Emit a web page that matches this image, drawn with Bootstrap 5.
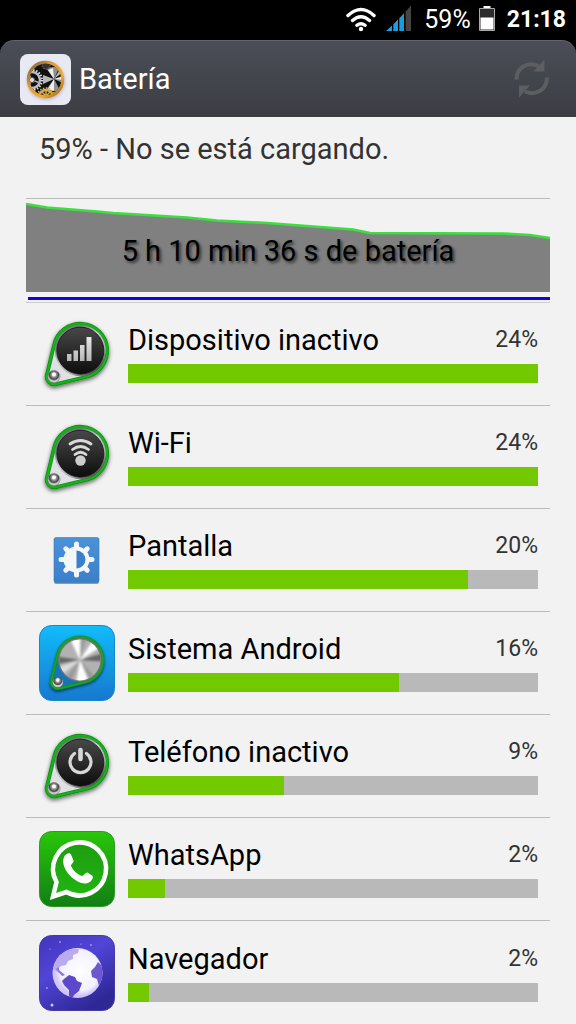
<!DOCTYPE html>
<html lang="es">
<head>
<meta charset="utf-8">
<meta name="viewport" content="width=device-width, initial-scale=1">
<title>Batería</title>
<link rel="stylesheet" href="https://cdn.jsdelivr.net/npm/bootstrap@5.3.0/dist/css/bootstrap.min.css">
<style>
  body { font-family: Roboto, "Noto Sans", sans-serif; background: #f2f2f2; color: #000; }
  .top-area { background: #000; }
  .status-bar { height: 40px; padding-right: 10px; font-size: 25px; line-height: 40px; }
  .clock { font-size: 23px; font-weight: 700; }
  .app-bar { height: 77px; padding: 0 24px 0 20px; border-radius: 14px 14px 0 0; background: linear-gradient(#4b4e57, #3c3d43); border-top: 1px solid #62656c; }
  .app-title { font-size: 29px; line-height: 36px; }
  .state { font-size: 29px; line-height: 36px; color: #333; padding: 14px 13px 31px; }
  .page { padding: 0 26px; }
  .chart-link { border-top: 1px solid #bbb; border-bottom: 1px solid #ccc; height: 105px; color: #000; }
  .chart-plot { height: 93px; }
  .chart-text { font-size: 29px; line-height: 36px; padding-top: 11px; text-shadow: 2px 2px 3px #333; }
  .chart-charge { height: 3px; margin: 5px 0 0 2px; background: #1200e6; }
  .usage { height: 103px; padding: 0 12px 0 13px; gap: 13px; border-bottom: 1px solid #bbb; color: #000; }
  .usage-body { padding-bottom: 3px; }
  .usage-name { font-size: 29px; line-height: 36px; }
  .usage-share { font-size: 23px; line-height: 36px; color: #333; }
  .progress { height: 19px; margin-top: 6px; border-radius: 0; background: #b9b9b9; }
  .progress-bar { background: #73c900; transition: none; }
</style>
</head>
<body>
<svg width="0" height="0" class="position-absolute" aria-hidden="true">
  <defs>
    <linearGradient id="dark" x1="0" y1="0" x2="0" y2="1"><stop offset="0" stop-color="#484848"/><stop offset=".5" stop-color="#2b2b2b"/><stop offset="1" stop-color="#0c0c0c"/></linearGradient>
    <linearGradient id="rim" x1="0" y1="0" x2=".8" y2="1"><stop offset="0" stop-color="#888"/><stop offset=".25" stop-color="#777780"/><stop offset=".5" stop-color="#c9c9d2"/><stop offset=".75" stop-color="#aaa"/><stop offset="1" stop-color="#333"/></linearGradient>
    <linearGradient id="glyph" x1="0" y1="0" x2="0" y2="1"><stop offset="0" stop-color="#e8e8e8"/><stop offset="1" stop-color="#b5b5b5"/></linearGradient>
    <radialGradient id="bead" cx=".5" cy=".35"><stop offset="0" stop-color="#fff"/><stop offset=".35" stop-color="#aaa"/><stop offset=".75" stop-color="#444"/><stop offset="1" stop-color="#ccc"/></radialGradient>
    <filter id="shade" x="-20%" y="-20%" width="150%" height="150%"><feDropShadow dx="0" dy="2" stdDeviation="2" flood-opacity=".6"/></filter>
    <filter id="soft" x="-20%" y="-20%" width="140%" height="140%"><feGaussianBlur stdDeviation="1.6"/></filter>
    <clipPath id="disc"><circle cx="42" cy="34" r="25"/></clipPath>
    <g id="knob" transform="translate(1 2) scale(.96)">
      <path d="M14.8 27.5A28 28 0 1 1 48.500 61.200L16.900 68.800A8 8 0 0 1 7.200 59.100Z" fill="#e0e0e4" stroke="#128f18" stroke-width="4" filter="url(#shade)"/>
      <path d="M14.800 27.500A28 28 0 1 1 48.500 61.200L16.900 68.800A8 8 0 0 1 7.200 59.100Z" fill="none" stroke="#14b31b" stroke-width="2.200"/>
      <circle cx="14.500" cy="61" r="6.400" fill="url(#bead)" stroke="#777" stroke-width=".6"/>
      <circle cx="14.500" cy="58.700" r="2" fill="#fff"/>
      <circle cx="42" cy="34" r="26.600" fill="url(#rim)"/>
      <circle cx="42" cy="34" r="24.500" fill="url(#dark)" stroke="#111" stroke-width=".8"/>
    </g>
  </defs>
</svg>

<header class="top-area text-white">
  <div class="status-bar d-flex align-items-center justify-content-end">
    <svg width="32" height="26" viewBox="0 0 32 26" fill="none" stroke="#fff" stroke-width="3.400" stroke-linecap="round" role="img" aria-label="Wi-Fi">
      <path d="M3 8.500Q16-3.500 29 8.500M7.500 13.500Q16 6 24.500 13.500M12 18.300Q16 15 20 18.300"/><circle cx="16" cy="22" r="2.200" fill="#fff" stroke="none"/>
    </svg>
    <svg class="ms-2 mb-1" width="27" height="27" viewBox="0 0 27 27" role="img" aria-label="Señal móvil">
      <path fill="#159ee0" d="M1 26L7 20.500V26ZM8.300 19.300L13 14.600V26H8.300ZM14.300 13.300L19 8.300V26H14.300Z"/><path fill="#444" d="M20.600 6.500L26 .5V26H20.600Z"/>
    </svg>
    <span class="ms-2 me-2 ps-1">59%</span>
    <svg class="mb-1" width="16" height="27" viewBox="0 0 16 27" role="img" aria-label="Batería al 59%">
      <path fill="#fff" d="M4.500 1h7v3h-7z"/><path d="M.5 3.500h15v22H.5z" fill="#2c2c2c" stroke="#aaa"/><path fill="#fff" d="M1.500 12.500h13V24.500h-13z"/>
    </svg>
    <span class="clock ms-2 ps-1">21:18</span>
  </div>
  <div class="app-bar d-flex align-items-center">
    <svg width="51" height="51" viewBox="0 0 51 51" aria-hidden="true">
      <defs>
        <linearGradient id="gold" x1="0" y1="0" x2="1" y2="1"><stop offset="0" stop-color="#6f5c3c"/><stop offset=".35" stop-color="#e09c35"/><stop offset=".7" stop-color="#f5ab2c"/><stop offset="1" stop-color="#8d5710"/></linearGradient>
        <clipPath id="watch"><circle cx="25.500" cy="25.500" r="15.800"/></clipPath>
      </defs>
      <rect width="51" height="51" rx="8" fill="#e9e9f3"/>
      <circle cx="26" cy="27" r="19" fill="#bcb9c0" filter="url(#soft)"/>
      <circle cx="25.500" cy="25.500" r="17.200" fill="#101010" stroke="url(#gold)" stroke-width="3"/>
      <g clip-path="url(#watch)">
        <circle cx="12" cy="26" r="8" fill="none" stroke="#b9bdc0" stroke-width="2.500"/>
        <circle cx="12" cy="26" r="10" fill="none" stroke="#dcdcdc" stroke-width="2" stroke-dasharray="1.500 1.500"/>
        <path d="M12 26L7 18M12 26L20 29M12 26L8 33" stroke="#aaa" stroke-width="1.800"/>
        <circle cx="12" cy="26" r="2.600" fill="#ddd" stroke="#555"/>
        <path d="M34 25L26 14L40 12ZM34 25L45 21V30ZM34 25L26 36L41 38Z" fill="#8c908e"/>
        <path d="M34 25L28 16L33 14ZM34 25L45 22V26ZM34 25L28 35L34 37Z" fill="#eee"/>
        <path d="M34 25L23 21V30ZM34 25L40 15L43 18Z" fill="#b5b8b5"/>
        <circle cx="26" cy="11" r="4" fill="#333" stroke="#555" stroke-width="1.500" stroke-dasharray="1.500 1"/>
        <circle cx="26" cy="43" r="7" fill="none" stroke="#d8a945" stroke-width="2.500"/>
        <circle cx="26" cy="43" r="9" fill="none" stroke="#e7bd5e" stroke-width="1.500" stroke-dasharray="1.500 1.500"/>
        <path d="M26 36v6M22 38l4 4 4-4" stroke="#d8a945" stroke-width="1.500" fill="none"/>
      </g>
    </svg>
    <h1 class="app-title fw-normal mb-0 ms-2">Batería</h1>
    <button type="button" class="btn p-0 border-0 ms-auto d-flex" aria-label="Actualizar">
      <svg width="40" height="42" viewBox="0 0 40 42" fill="none" stroke="#5c5e61" stroke-width="4">
        <path d="M4.500 21.500C4.500 10 15 3 26.500 8M35 19.500C35 31 24.500 38.500 13 33.500"/>
        <path stroke="none" fill="#5c5e61" d="M32.500 1.500V13.500H21.500ZM7 39.500V27.500H18Z"/>
      </svg>
    </button>
  </div>
</header>

<main class="page">
  <p class="state mb-0">59% - No se está cargando.</p>
  <a href="#historial" class="chart-link d-block text-decoration-none">
    <div class="chart-plot position-relative">
      <svg class="d-block w-100 h-100" viewBox="0 0 524 93" preserveAspectRatio="none" aria-hidden="true">
        <path fill="#808080" d="M0 5L21 8.500 71 12.500 87 14 161 18.500 191 21.500 241 24 327 30.500 344 34 477 34.500 504 36 524 39V93H0Z"/>
        <path fill="none" stroke="#3be03e" stroke-width="2.600" d="M0 5L21 8.500 71 12.500 87 14 161 18.500 191 21.500 241 24 327 30.500 344 34 477 34.500 504 36 524 39"/>
      </svg>
      <div class="chart-text position-absolute top-0 start-0 w-100 h-100 d-flex align-items-center justify-content-center">5 h 10 min 36 s de batería</div>
    </div>
    <div class="chart-charge"></div>
  </a>

  <ul class="list-unstyled mb-0">
    <li><a href="#inactivo" class="usage d-flex align-items-center text-decoration-none">
      <svg class="flex-shrink-0" width="76" height="76" viewBox="0 0 76 76" aria-hidden="true"><use href="#knob"/>
        <path fill="url(#glyph)" d="M28 38h4.500v7H28zM34.500 34.500H39V45h-4.500zM41 29h4.500v16H41zM47.500 21H52.500V45h-5z"/></svg>
      <div class="usage-body flex-grow-1">
        <div class="d-flex justify-content-between"><span class="usage-name">Dispositivo inactivo</span><span class="usage-share">24%</span></div>
        <div class="progress" role="progressbar" aria-label="Dispositivo inactivo"><div class="progress-bar" style="width:100%"></div></div>
      </div></a></li>
    <li><a href="#wifi" class="usage d-flex align-items-center text-decoration-none">
      <svg class="flex-shrink-0" width="76" height="76" viewBox="0 0 76 76" aria-hidden="true"><use href="#knob"/>
        <g fill="none" stroke="#d9d9d9" stroke-width="2.800" stroke-linecap="round"><path d="M31 25Q41.500 18 52 25M33.500 30.500Q41.500 24.500 49.500 30.500M36 35.500Q41.500 31 47 35.500"/></g><circle cx="41.500" cy="41.500" r="5.200" fill="#cdcdcd"/></svg>
      <div class="usage-body flex-grow-1">
        <div class="d-flex justify-content-between"><span class="usage-name">Wi-Fi</span><span class="usage-share">24%</span></div>
        <div class="progress" role="progressbar" aria-label="Wi-Fi"><div class="progress-bar" style="width:100%"></div></div>
      </div></a></li>
    <li><a href="#pantalla" class="usage d-flex align-items-center text-decoration-none">
      <svg class="flex-shrink-0" width="76" height="76" viewBox="0 0 76 76" aria-hidden="true">
        <defs><linearGradient id="display" x1="0" y1="0" x2="0" y2="1"><stop offset="0" stop-color="#4a92d8"/><stop offset="1" stop-color="#3b7fca"/></linearGradient></defs>
        <rect x="15" y="16" width="45" height="46" rx="2" fill="#8b99aa"/><rect x="15" y="15.500" width="45" height="45" rx="2" fill="url(#display)" stroke="#397bbd" stroke-width=".6"/>
        <g fill="#f4f7fa"><g stroke="#f4f7fa" stroke-width="5" stroke-linecap="round"><path d="M37.500 22V53M22 37.500H53M26.800 26.800L48.200 48.200M48.200 26.800L26.800 48.200"/></g><circle cx="37.500" cy="37.500" r="13"/></g>
        <path d="M37.500 28.500A9 9 0 0 1 37.500 46.500Z" fill="#397fc9"/></svg>
      <div class="usage-body flex-grow-1">
        <div class="d-flex justify-content-between"><span class="usage-name">Pantalla</span><span class="usage-share">20%</span></div>
        <div class="progress" role="progressbar" aria-label="Pantalla"><div class="progress-bar" style="width:83%"></div></div>
      </div></a></li>
    <li><a href="#sistema" class="usage d-flex align-items-center text-decoration-none">
      <svg class="flex-shrink-0" width="76" height="76" viewBox="0 0 76 76" aria-hidden="true">
        <defs><linearGradient id="sky" x1="0" y1="0" x2="0" y2="1"><stop offset="0" stop-color="#12bcfa"/><stop offset="1" stop-color="#1678cf"/></linearGradient></defs>
        <rect x=".5" y=".5" width="75" height="75" rx="12" fill="url(#sky)" stroke="#1687c8"/>
        <g transform="translate(6.500 7) scale(.82)">
          <path d="M14.800 27.500A28 28 0 1 1 48.500 61.200L16.900 68.800A8 8 0 0 1 7.200 59.100Z" fill="#1775b8" stroke="#168c26" stroke-width="3.600" filter="url(#shade)"/>
          <path d="M14.800 27.500A28 28 0 1 1 48.500 61.200L16.900 68.800A8 8 0 0 1 7.200 59.100Z" fill="none" stroke="#18a81f" stroke-width="1.800"/>
          <circle cx="15" cy="61" r="6.400" fill="url(#bead)"/><circle cx="15" cy="58.500" r="2" fill="#fff"/>
          <circle cx="42" cy="34" r="26.600" fill="#777"/>
          <g clip-path="url(#disc)"><circle cx="42" cy="34" r="25.500" fill="#b2b2b2"/>
            <g filter="url(#soft)"><path fill="#fff" d="M42 34L28 4H42ZM42 34L62 4L68 18ZM42 34L37 64H54Z"/><path fill="#ddd" d="M42 34L13 44V58Z"/><path fill="#666" d="M42 34L14 30V39ZM42 34L70 26V36Z"/><path fill="#999" d="M42 34L56 61L62 56ZM42 34L45 5H50ZM42 34L22 59L30 62Z"/></g></g>
        </g></svg>
      <div class="usage-body flex-grow-1">
        <div class="d-flex justify-content-between"><span class="usage-name">Sistema Android</span><span class="usage-share">16%</span></div>
        <div class="progress" role="progressbar" aria-label="Sistema Android"><div class="progress-bar" style="width:66%"></div></div>
      </div></a></li>
    <li><a href="#telefono" class="usage d-flex align-items-center text-decoration-none">
      <svg class="flex-shrink-0" width="76" height="76" viewBox="0 0 76 76" aria-hidden="true"><use href="#knob"/>
        <g fill="none" stroke="#d8d8d8"><path stroke-width="3.200" stroke-linecap="round" d="M35.500 25.500A10.500 10.500 0 1 0 47.500 25.500"/><path stroke-width="4.600" stroke-linecap="round" d="M41.500 22V31"/></g></svg>
      <div class="usage-body flex-grow-1">
        <div class="d-flex justify-content-between"><span class="usage-name">Teléfono inactivo</span><span class="usage-share">9%</span></div>
        <div class="progress" role="progressbar" aria-label="Teléfono inactivo"><div class="progress-bar" style="width:38%"></div></div>
      </div></a></li>
    <li><a href="#whatsapp" class="usage d-flex align-items-center text-decoration-none">
      <svg class="flex-shrink-0" width="76" height="76" viewBox="0 0 76 76" aria-hidden="true">
        <defs><linearGradient id="leaf" x1="0" y1="0" x2="0" y2="1"><stop offset="0" stop-color="#2ac60a"/><stop offset="1" stop-color="#117f14"/></linearGradient>
        <linearGradient id="leaf2" x1="0" y1="0" x2="0" y2="1"><stop offset="0" stop-color="#1d9d12"/><stop offset="1" stop-color="#21b510"/></linearGradient></defs>
        <rect x=".5" y=".5" width="75" height="75" rx="12" fill="url(#leaf)" stroke="#2e9a2a"/>
        <path d="M14 65.500L17.500 51A26.500 26.500 0 1 1 27.500 61Z" fill="url(#leaf2)" stroke="#fff" stroke-width="4.500" stroke-linejoin="miter"/>
        <path fill="#fff" d="M25.500 25C28 21.500 31 21.500 32 23.500L34.500 29.500C35 31.500 31.500 33.500 32 35C34 39.500 38 43 42.500 45C44.500 45.500 46.500 41 48.500 41.500L53 44.500C55 45.800 53 50 50 51.500C45 54 38 51 33 46.500C27 41.500 21.500 32 25.500 25Z"/></svg>
      <div class="usage-body flex-grow-1">
        <div class="d-flex justify-content-between"><span class="usage-name">WhatsApp</span><span class="usage-share">2%</span></div>
        <div class="progress" role="progressbar" aria-label="WhatsApp"><div class="progress-bar" style="width:9%"></div></div>
      </div></a></li>
    <li><a href="#navegador" class="usage d-flex align-items-center text-decoration-none border-0">
      <svg class="flex-shrink-0" width="76" height="76" viewBox="0 0 76 76" aria-hidden="true">
        <defs><linearGradient id="night" x1="0" y1="0" x2=".6" y2="1"><stop offset="0" stop-color="#4434bd"/><stop offset=".45" stop-color="#5145d6"/><stop offset="1" stop-color="#2e2896"/></linearGradient>
        <radialGradient id="sea" cx=".55" cy=".45"><stop offset="0" stop-color="#fff"/><stop offset=".8" stop-color="#f3f0ff"/><stop offset="1" stop-color="#cfc5fa"/></radialGradient>
        <clipPath id="earth"><circle cx="38.500" cy="38" r="25"/></clipPath></defs>
        <rect x=".5" y=".5" width="75" height="75" rx="12" fill="url(#night)" stroke="#463ba3"/>
        <circle cx="38.500" cy="38" r="25" fill="url(#sea)"/>
        <g clip-path="url(#earth)">
          <path fill="#b8abf0" d="M14 34L19 21L30 13L40 14L39 18L34 20L34 24L29 26L27 30L22 31L18 34L19 36L23 38L25 41L17 36Z"/>
          <path fill="#8878df" d="M17 34L20 32L20 35L26 40L23 41Z"/>
          <path fill="#5d48cb" d="M25 44L30 40L36 42L38 46L43 48L40 56L35 60L33 64L30 62L30 55L25 50L23 46Z"/>
          <path fill="#6b57d2" d="M59 27L65 33V49L60 51L58 44L53 42L52 36L56 32Z"/>
        </g>
        <g fill="#cfcaff"><circle cx="13" cy="70" r="1.500"/><circle cx="21" cy="7" r=".8"/><circle cx="52" cy="10" r=".8"/><circle cx="8" cy="53" r=".8"/><circle cx="11" cy="14" r=".6"/><circle cx="42" cy="9" r=".6"/></g></svg>
      <div class="usage-body flex-grow-1">
        <div class="d-flex justify-content-between"><span class="usage-name">Navegador</span><span class="usage-share">2%</span></div>
        <div class="progress" role="progressbar" aria-label="Navegador"><div class="progress-bar" style="width:5%"></div></div>
      </div></a></li>
  </ul>
</main>
<script src="https://cdn.jsdelivr.net/npm/bootstrap@5.3.0/dist/js/bootstrap.bundle.min.js"></script>
</body>
</html>
